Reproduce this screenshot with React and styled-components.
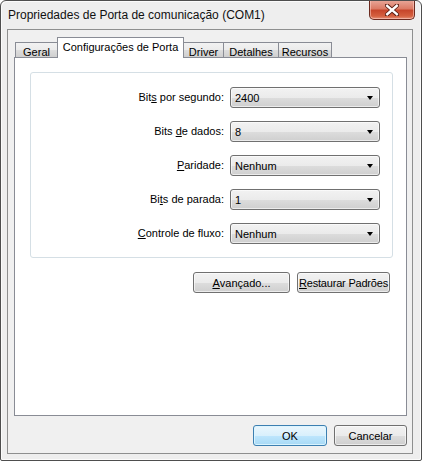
import React from "react";
import styled, { createGlobalStyle } from "styled-components";

const GlobalStyle = createGlobalStyle`
  html, body {
    margin: 0;
    padding: 0;
    background: #ffffff;
  }
  * {
    box-sizing: border-box;
  }
`;

const Window = styled.div`
  width: 422px;
  height: 461px;
  display: flex;
  flex-direction: column;
  padding: 0 8px 6px 6px;
  background: #eeeeee;
  border: 1px solid #4e4e4e;
  border-radius: 6px 6px 2px 2px;
  box-shadow: inset 1px 1px 0 #fbfbfb, inset -1px -1px 0 #fbfbfb;
  font-family: "Liberation Sans", Arial, sans-serif;
  font-size: 11px;
  color: #000;
  overflow: hidden;
`;

const TitleBar = styled.div`
  height: 28px;
  display: flex;
  align-items: flex-start;
  justify-content: space-between;
  margin-right: -2px;
`;

const Title = styled.div`
  padding-top: 7px;
  padding-left: 1px;
  font-size: 12px;
  color: #111;
`;

const CloseButton = styled.div`
  width: 46px;
  height: 20px;
  margin-top: -1px;
  display: flex;
  align-items: center;
  justify-content: center;
  border: 1px solid #6b2a1f;
  border-top: none;
  border-radius: 0 0 5px 5px;
  background: linear-gradient(
    to bottom,
    #e9a99b 0%,
    #dc7b66 45%,
    #c7462b 55%,
    #d5603f 85%,
    #e6937b 100%
  );
  box-shadow: inset 0 0 0 1px rgba(255, 210, 200, 0.55);
`;

const Client = styled.div`
  flex: 1;
  display: flex;
  flex-direction: column;
  padding: 7px 5px 7px 6px;
  border: 1px solid #8e8f8f;
  background: #f0f0f0;
`;

const TabStrip = styled.div`
  height: 21px;
  display: flex;
  align-items: flex-end;
  padding-left: 1px;
  margin-bottom: -1px;
  position: relative;
  z-index: 1;
`;

const Tab = styled.div`
  width: ${({ $w }) => $w}px;
  height: ${({ $active }) => ($active ? 21 : 16)}px;
  margin-left: ${({ $first }) => ($first ? 0 : -1)}px;
  display: flex;
  align-items: center;
  justify-content: center;
  padding-top: ${({ $active }) => ($active ? 0 : 3)}px;
  padding-bottom: ${({ $active }) => ($active ? 3 : 0)}px;
  border: 1px solid #898c95;
  border-bottom: ${({ $active }) => ($active ? "none" : "1px solid #898c95")};
  background: ${({ $active }) =>
    $active
      ? "#ffffff"
      : "linear-gradient(to bottom, #f2f2f2 0%, #ebebeb 50%, #dddddd 51%, #cfcfcf 100%)"};
  position: relative;
  z-index: ${({ $active }) => ($active ? 2 : 1)};
  white-space: nowrap;
`;

const Panel = styled.div`
  flex: 1;
  display: flex;
  flex-direction: column;
  border: 1px solid #898c95;
  background: #ffffff;
  padding: 14px 16px 0 15px;
`;

const GroupBox = styled.div`
  height: 186px;
  margin-right: -3px;
  border: 1px solid #d5dfe5;
  border-radius: 3px;
  padding: 14px 12px 0 0;
  display: grid;
  grid-template-columns: 1fr 150px;
  grid-auto-rows: 21px;
  column-gap: 6px;
  row-gap: 13px;
`;

const Label = styled.label`
  display: block;
  line-height: 21px;
  text-align: right;
  white-space: pre;
`;

const Key = styled.span`
  text-decoration: underline;
  text-underline-offset: 1px;
`;

const Combo = styled.div`
  display: flex;
  align-items: center;
  justify-content: space-between;
  padding: 0 6px 0 4px;
  border: 1px solid #707070;
  border-radius: 3px;
  background: linear-gradient(
    to bottom,
    #f2f2f2 0%,
    #ebebeb 50%,
    #dddddd 51%,
    #cfcfcf 100%
  );
  box-shadow: inset 0 0 0 1px rgba(255, 255, 255, 0.6);
`;

const Arrow = styled.span`
  width: 0;
  height: 0;
  border-left: 3.5px solid transparent;
  border-right: 3.5px solid transparent;
  border-top: 4px solid #000;
`;

const ActionRow = styled.div`
  display: flex;
  justify-content: flex-end;
  gap: 7px;
  margin-top: 14px;
`;

const Button = styled.div`
  width: ${({ $w }) => $w}px;
  height: 21px;
  display: flex;
  align-items: center;
  justify-content: center;
  border: 1px solid ${({ $default }) => ($default ? "#3c7fb1" : "#707070")};
  border-radius: 3px;
  background: ${({ $default }) =>
    $default
      ? "linear-gradient(to bottom, #eaf6fd 0%, #d9f0fc 50%, #bee6fd 51%, #a7d9f5 100%)"
      : "linear-gradient(to bottom, #f2f2f2 0%, #ebebeb 50%, #dddddd 51%, #cfcfcf 100%)"};
  box-shadow: inset 0 0 0 1px
    ${({ $default }) => ($default ? "rgba(220,245,255,0.9)" : "rgba(255,255,255,0.6)")};
  white-space: pre;
  letter-spacing: ${({ $tight }) => ($tight ? "-0.2px" : "0")};
`;

const Footer = styled.div`
  display: flex;
  justify-content: flex-end;
  gap: 7px;
  margin-top: 9px;
`;

const tabs = [
  { name: "Geral", w: 43 },
  { name: "Configurações de Porta", w: 127, active: true },
  { name: "Driver", w: 41 },
  { name: "Detalhes", w: 56 },
  { name: "Recursos", w: 54 },
];

const settings = [
  { label: ["Bit", "s", " por segundo:"], value: "2400" },
  { label: ["Bits ", "d", "e dados:"], value: "8" },
  { label: ["", "P", "aridade:"], value: "Nenhum" },
  { label: ["Bi", "t", "s de parada:"], value: "1" },
  { label: ["", "C", "ontrole de fluxo:"], value: "Nenhum" },
];

const CloseIcon = () => (
  <svg width="14" height="12" viewBox="0 0 14 12">
    <path
      d="M2 1.5 L12 10.5 M12 1.5 L2 10.5"
      stroke="#5a1d12"
      strokeWidth="4.2"
      strokeLinecap="square"
    />
    <path
      d="M2.2 1.8 L11.8 10.2 M11.8 1.8 L2.2 10.2"
      stroke="#ffffff"
      strokeWidth="2.4"
      strokeLinecap="square"
    />
  </svg>
);

const App = () => {
  return (
    <>
      <GlobalStyle />
      <Window>
        <TitleBar>
          <Title>Propriedades de Porta de comunicação (COM1)</Title>
          <CloseButton>
            <CloseIcon />
          </CloseButton>
        </TitleBar>
        <Client>
          <TabStrip>
            {tabs.map((t, i) => (
              <Tab key={t.name} $w={t.w} $active={t.active} $first={i === 0}>
                {t.name}
              </Tab>
            ))}
          </TabStrip>
          <Panel>
            <GroupBox>
              {settings.map((s) => (
                <React.Fragment key={s.value + s.label[2]}>
                  <Label>
                    {s.label[0]}
                    <Key>{s.label[1]}</Key>
                    {s.label[2]}
                  </Label>
                  <Combo>
                    <span>{s.value}</span>
                    <Arrow />
                  </Combo>
                </React.Fragment>
              ))}
            </GroupBox>
            <ActionRow>
              <Button $w={97}>
                <Key>A</Key>vançado...
              </Button>
              <Button $w={93} $tight>
                <Key>R</Key>estaurar Padrões
              </Button>
            </ActionRow>
          </Panel>
          <Footer>
            <Button $w={74} $default>
              OK
            </Button>
            <Button $w={73}>Cancelar</Button>
          </Footer>
        </Client>
      </Window>
    </>
  );
};

export default App;
